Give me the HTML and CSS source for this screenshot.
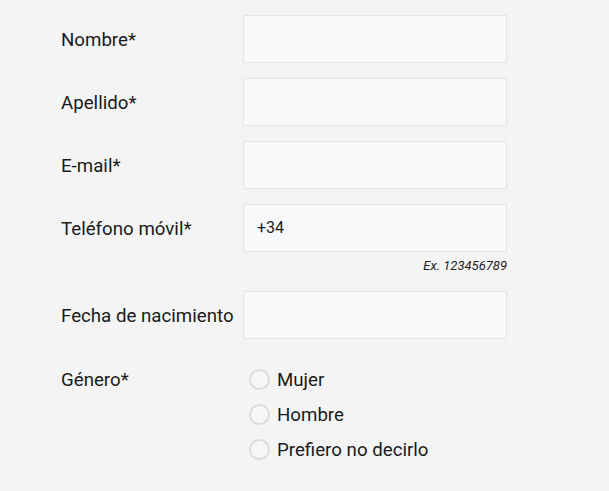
FILE: index.html
```html
<!DOCTYPE html>
<html lang="es">
<head>
<meta charset="utf-8">
<link rel="stylesheet" href="styles.css">
</head>
<body>
<form class="form">
  <div class="row">
    <label class="label">Nombre*</label>
    <div class="field"><input class="input" type="text"></div>
  </div>
  <div class="row">
    <label class="label">Apellido*</label>
    <div class="field"><input class="input" type="text"></div>
  </div>
  <div class="row">
    <label class="label">E-mail*</label>
    <div class="field"><input class="input" type="text"></div>
  </div>
  <div class="row row-phone">
    <label class="label label-top">Teléfono móvil*</label>
    <div class="field">
      <input class="input" type="text" value="+34">
      <div class="hint">Ex. 123456789</div>
    </div>
  </div>
  <div class="row">
    <label class="label">Fecha de nacimiento</label>
    <div class="field"><input class="input" type="text"></div>
  </div>
  <div class="row row-gender">
    <div class="label label-gender">Género*</div>
    <div class="radios">
      <label class="radio"><span class="circle"></span>Mujer</label>
      <label class="radio"><span class="circle"></span>Hombre</label>
      <label class="radio"><span class="circle"></span>Prefiero no decirlo</label>
    </div>
  </div>
</form>
</body>
</html>
```
FILE: styles.css
```css
html, body {
  margin: 0;
  padding: 0;
  background: #f4f4f4;
}
body {
  font-family: Roboto, "Noto Sans", sans-serif;
  color: #1a1a1a;
  width: 609px;
  height: 491px;
  overflow: hidden;
}
.form {
  padding: 15px 0 0 61px;
  display: flex;
  flex-direction: column;
  gap: 15px;
}
.row {
  display: grid;
  grid-template-columns: 182px 264px;
  align-items: center;
}
.row-phone {
  align-items: start;
}
.label {
  font-size: 18.7px;
  line-height: 24px;
  padding-top: 2px;
}
.label-top {
  padding-top: 13px;
}
.input {
  box-sizing: border-box;
  display: block;
  width: 264px;
  height: 48px;
  margin: 0;
  border: 1px solid #e4e4e4;
  background: #f8f9fa;
  font-family: Roboto, sans-serif;
  font-size: 16px;
  color: #1a1a1a;
  padding: 0 13px 2px;
  outline: none;
}
.hint {
  text-align: right;
  font-size: 13px;
  font-style: italic;
  line-height: 15px;
  margin-top: 6px;
  margin-bottom: 3px;
  color: #222;
}
.row-gender {
  align-items: start;
  margin-top: 8px;
}
.label-gender {
  padding-top: 6px;
}
.radios {
  display: flex;
  flex-direction: column;
  padding-left: 6px;
}
.radio {
  display: flex;
  align-items: center;
  height: 35px;
  font-size: 18.7px;
}
.circle {
  box-sizing: border-box;
  width: 21px;
  height: 21px;
  border: 2px solid #dcdcdc;
  border-radius: 50%;
  background: #f6f6f6;
  margin-right: 7px;
}
```
